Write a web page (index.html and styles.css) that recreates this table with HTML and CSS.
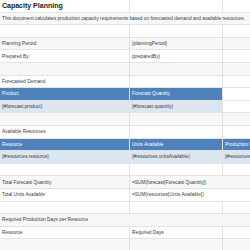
FILE: index.html
```html
<!DOCTYPE html>
<html>
<head>
<meta charset="utf-8">
<link rel="stylesheet" href="styles.css">
</head>
<body>
<div class="sheet">
  <div class="row"><div class="c a title">Capacity Planning</div><div class="c b"></div><div class="c c3"></div></div>
  <div class="row alt"><div class="c span3">This document calculates production capacity requirements based on forecasted demand and available resources.</div></div>
  <div class="row"><div class="c a"></div><div class="c b"></div><div class="c c3"></div></div>
  <div class="row alt"><div class="c a">Planning Period:</div><div class="c b">{planningPeriod}</div><div class="c c3"></div></div>
  <div class="row"><div class="c a">Prepared By:</div><div class="c b">{preparedBy}</div><div class="c c3"></div></div>
  <div class="row alt"><div class="c a"></div><div class="c b"></div><div class="c c3"></div></div>
  <div class="row"><div class="c a">Forecasted Demand</div><div class="c b"></div><div class="c c3"></div></div>
  <div class="row"><div class="c a head">Product</div><div class="c b head">Forecast Quantity</div><div class="c c3"></div></div>
  <div class="row"><div class="c a data">{#forecast.product}</div><div class="c b data">{#forecast.quantity}</div><div class="c c3"></div></div>
  <div class="row alt"><div class="c a"></div><div class="c b"></div><div class="c c3"></div></div>
  <div class="row"><div class="c a">Available Resources</div><div class="c b"></div><div class="c c3"></div></div>
  <div class="row"><div class="c a head">Resource</div><div class="c b head">Units Available</div><div class="c c3 head">Production Rate</div></div>
  <div class="row"><div class="c a data">{#resources.resource}</div><div class="c b data">{#resources.unitsAvailable}</div><div class="c c3 data">{#resources.productionRate}</div></div>
  <div class="row"><div class="c a"></div><div class="c b"></div><div class="c c3"></div></div>
  <div class="row alt"><div class="c a">Total Forecast Quantity</div><div class="c span2">=SUM(forecast[Forecast Quantity])</div></div>
  <div class="row"><div class="c a">Total Units Available</div><div class="c span2">=SUM(resources[Units Available])</div></div>
  <div class="row"><div class="c a"></div><div class="c b"></div><div class="c c3"></div></div>
  <div class="row alt"><div class="c span3">Required Production Days per Resource</div></div>
  <div class="row"><div class="c a">Resource</div><div class="c b">Required Days</div><div class="c c3"></div></div>
  <div class="row alt"><div class="c a"></div><div class="c b"></div><div class="c c3"></div></div>
</div>
</body>
</html>
```
FILE: styles.css
```css
html, body {
  margin: 0;
  padding: 0;
  background: #ffffff;
  overflow: hidden;
}
.sheet {
  width: 420px;
  font-family: "Liberation Sans", Arial, sans-serif;
  font-size: 4.8px;
  color: #3a3a3a;
}
.row {
  display: grid;
  grid-template-columns: 130px 93px 197px;
  height: 12.6px;
}
.row.alt {
  background: #f7f7f7;
}
.c {
  box-sizing: border-box;
  border-right: 1px solid #e3e3e3;
  border-bottom: 1px solid #e3e3e3;
  padding-left: 2px;
  display: flex;
  align-items: center;
  white-space: nowrap;
  overflow: hidden;
}
.span3 {
  grid-column: 1 / 4;
}
.span2 {
  grid-column: 2 / 4;
}
.title {
  font-size: 7px;
  font-weight: bold;
  color: #222222;
}
.head {
  background: #4f81bd;
  color: #ffffff;
}
.data {
  background: #dce6f1;
}
```
